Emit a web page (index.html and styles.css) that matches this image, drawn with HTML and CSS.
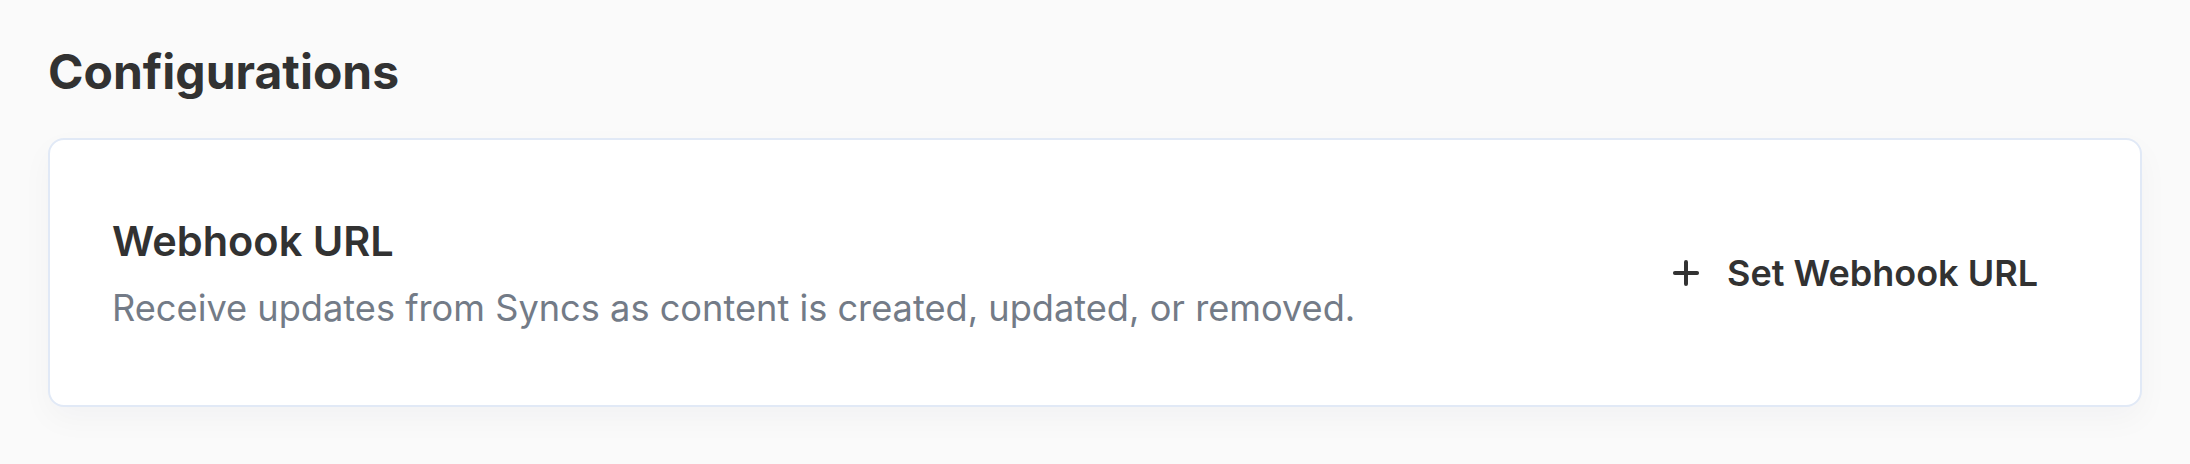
FILE: index.html
```html
<!DOCTYPE html>
<html lang="en">
<head>
  <meta charset="UTF-8" />
  <title>Configurations</title>
  <link rel="stylesheet" href="styles.css">
</head>
<body>
  <main class="page">
    <h1 class="page-title">Configurations</h1>

    <div class="config-card">
      <div class="config-info">
        <h2>Webhook URL</h2>
        <p>Receive updates from Syncs as content is created, updated, or removed.</p>
      </div>
      <button class="add-btn" type="button">
        <svg width="28" height="28" viewBox="0 0 24 24" fill="none" stroke="currentColor" stroke-width="3.4" stroke-linecap="round">
          <path d="M12 2.5v19M2.5 12h19" />
        </svg>
        <span>Set Webhook URL</span>
      </button>
    </div>
  </main>
</body>
</html>
```

FILE: styles.css
```css
body {
  margin: 0;
  padding: 0;
  background: #fafafa;
  font-family: Inter, "Noto Sans", sans-serif;
  color: #323232;
}

.page {
  padding: 43px 48px;
}

.page-title {
  margin: 0 0 37px;
  font-size: 48px;
  line-height: 58px;
  font-weight: 700;
  color: #323232;
}

.config-card {
  display: flex;
  align-items: center;
  justify-content: space-between;
  background: #fff;
  border: 2px solid #e1e9f6;
  border-radius: 16px;
  padding: 76px 62px 75px;
  box-shadow: 0 12px 32px rgba(30, 40, 60, 0.035);
}

.config-info h2 {
  margin: 0 0 20px;
  font-size: 41.5px;
  line-height: 50px;
  font-weight: 600;
  color: #323232;
}

.config-info p {
  margin: 0;
  font-size: 36.2px;
  line-height: 44px;
  color: #737b87;
}

.add-btn {
  display: flex;
  align-items: center;
  gap: 27px;
  background: none;
  border: none;
  padding: 10px 40px;
  font-family: inherit;
  font-size: 36px;
  font-weight: 600;
  color: #323232;
  cursor: pointer;
}
```
